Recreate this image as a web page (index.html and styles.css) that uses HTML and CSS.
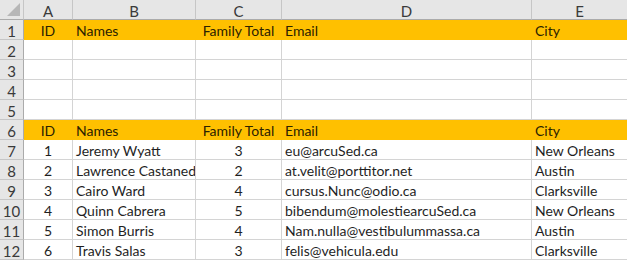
FILE: index.html
```html
<!DOCTYPE html>
<html>
<head>
<meta charset="utf-8">
<link rel="stylesheet" href="styles.css">
</head>
<body>
<div class="sheet">
  <div class="corner"><span class="tri"></span></div>
  <div class="ch">A</div><div class="ch">B</div><div class="ch">C</div><div class="ch">D</div><div class="ch last">E</div>

  <div class="rh">1</div>
  <div class="c y ctr">ID</div><div class="c y">Names</div><div class="c y ctr">Family Total</div><div class="c y">Email</div><div class="c y last">City</div>

  <div class="rh">2</div><div class="c"></div><div class="c"></div><div class="c"></div><div class="c"></div><div class="c last"></div>
  <div class="rh">3</div><div class="c"></div><div class="c"></div><div class="c"></div><div class="c"></div><div class="c last"></div>
  <div class="rh">4</div><div class="c"></div><div class="c"></div><div class="c"></div><div class="c"></div><div class="c last"></div>
  <div class="rh">5</div><div class="c"></div><div class="c"></div><div class="c"></div><div class="c"></div><div class="c last"></div>

  <div class="rh">6</div>
  <div class="c y ctr">ID</div><div class="c y">Names</div><div class="c y ctr">Family Total</div><div class="c y">Email</div><div class="c y last">City</div>

  <div class="rh">7</div><div class="c ctr">1</div><div class="c">Jeremy Wyatt</div><div class="c ctr">3</div><div class="c">eu@arcuSed.ca</div><div class="c last">New Orleans</div>
  <div class="rh">8</div><div class="c ctr">2</div><div class="c">Lawrence Castaned</div><div class="c ctr">2</div><div class="c">at.velit@porttitor.net</div><div class="c last">Austin</div>
  <div class="rh">9</div><div class="c ctr">3</div><div class="c">Cairo Ward</div><div class="c ctr">4</div><div class="c">cursus.Nunc@odio.ca</div><div class="c last">Clarksville</div>
  <div class="rh">10</div><div class="c ctr">4</div><div class="c">Quinn Cabrera</div><div class="c ctr">5</div><div class="c">bibendum@molestiearcuSed.ca</div><div class="c last">New Orleans</div>
  <div class="rh">11</div><div class="c ctr">5</div><div class="c">Simon Burris</div><div class="c ctr">4</div><div class="c">Nam.nulla@vestibulummassa.ca</div><div class="c last">Austin</div>
  <div class="rh">12</div><div class="c ctr">6</div><div class="c">Travis Salas</div><div class="c ctr">3</div><div class="c">felis@vehicula.edu</div><div class="c last">Clarksville</div>
</div>
</body>
</html>
```
FILE: styles.css
```css
html, body {
  margin: 0;
  padding: 0;
  background: #ffffff;
}
.sheet {
  display: grid;
  grid-template-columns: 24px 49px 123px 86px 250px 95px;
  grid-template-rows: repeat(13, 20px);
  font-family: Lato, "Open Sans", sans-serif;
  font-size: 14px;
  color: #1f1f1f;
  width: 627px;
  overflow: hidden;
}
.sheet > div {
  box-sizing: border-box;
  line-height: 20px;
  padding-top: 1px;
  white-space: nowrap;
  overflow: hidden;
}
.corner {
  background: #e6e6e6;
  border-right: 1px solid #c6c6c6;
  border-bottom: 1px solid #ababab;
  position: relative;
}
.tri {
  position: absolute;
  right: 3px;
  bottom: 3px;
  width: 0;
  height: 0;
  border-left: 13px solid transparent;
  border-bottom: 13px solid #b7b7b7;
}
.ch {
  background: #e6e6e6;
  color: #3a3a3a;
  font-size: 15px;
  text-align: center;
  border-right: 1px solid #c6c6c6;
  border-bottom: 1px solid #ababab;
}
.rh {
  background: #e6e6e6;
  color: #3a3a3a;
  font-size: 15px;
  text-align: center;
  border-right: 1px solid #ababab;
  border-bottom: 1px solid #c6c6c6;
}
.c {
  padding-left: 3px;
  border-right: 1px solid #d4d4d4;
  border-bottom: 1px solid #d4d4d4;
}
.ctr {
  text-align: center;
  padding-left: 0;
}
.y {
  background: #ffc000;
  color: #2b2200;
  border-right-color: #ffc000;
  border-bottom-color: #ffc000;
}
.last {
  border-right: none;
}
```
